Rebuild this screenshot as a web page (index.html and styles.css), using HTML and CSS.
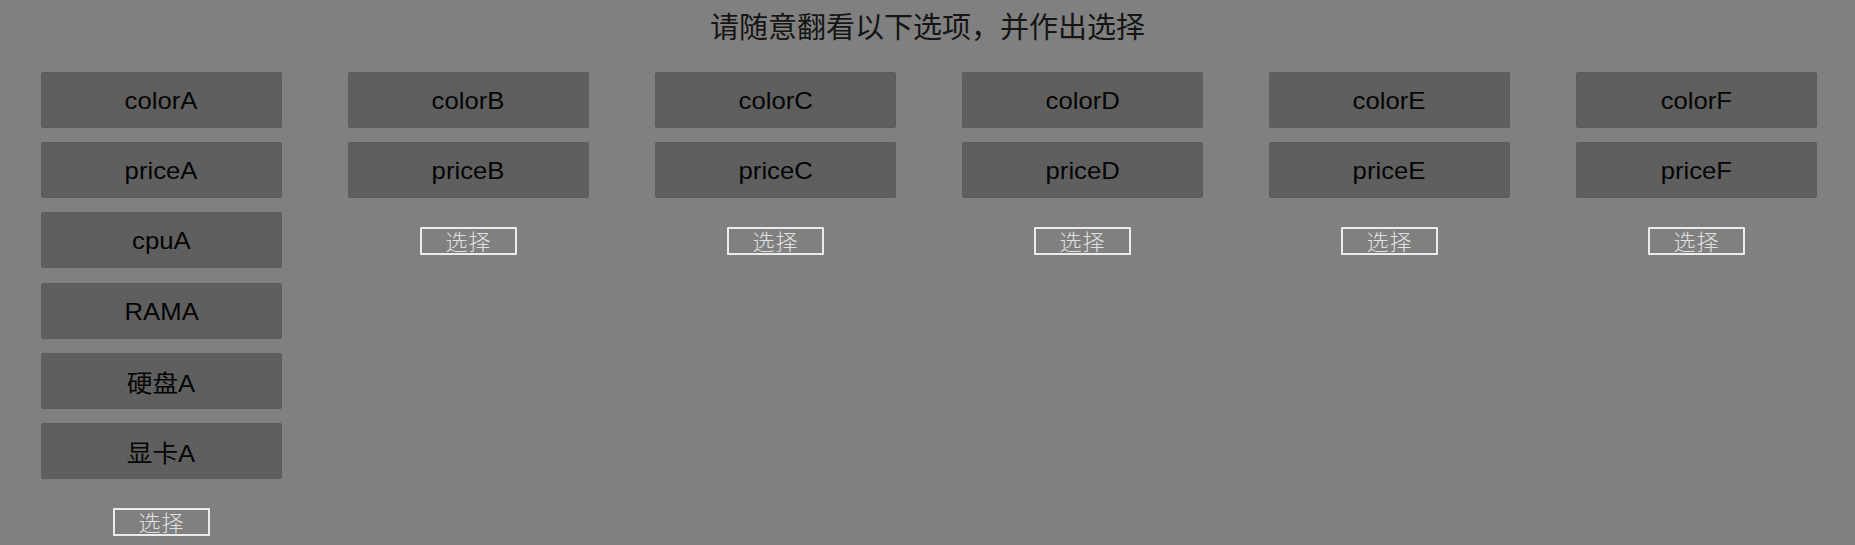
FILE: index.html
```html
<!DOCTYPE html>
<html lang="zh">
<head>
<meta charset="utf-8">
<link rel="stylesheet" href="styles.css">
</head>
<body>
<h1 class="title">请随意翻看以下选项，并作出选择</h1>
<div class="columns">
  <div class="col">
    <div class="box"><span class="label">colorA</span></div>
    <div class="box"><span class="label">priceA</span></div>
    <div class="box"><span class="label">cpuA</span></div>
    <div class="box"><span class="label">RAMA</span></div>
    <div class="box"><span class="label">硬盘A</span></div>
    <div class="box"><span class="label">显卡A</span></div>
    <button class="choose">选择</button>
  </div>
  <div class="col">
    <div class="box"><span class="label">colorB</span></div>
    <div class="box"><span class="label">priceB</span></div>
    <button class="choose">选择</button>
  </div>
  <div class="col">
    <div class="box"><span class="label">colorC</span></div>
    <div class="box"><span class="label">priceC</span></div>
    <button class="choose">选择</button>
  </div>
  <div class="col">
    <div class="box"><span class="label">colorD</span></div>
    <div class="box"><span class="label">priceD</span></div>
    <button class="choose">选择</button>
  </div>
  <div class="col">
    <div class="box"><span class="label">colorE</span></div>
    <div class="box"><span class="label">priceE</span></div>
    <button class="choose">选择</button>
  </div>
  <div class="col">
    <div class="box"><span class="label">colorF</span></div>
    <div class="box"><span class="label">priceF</span></div>
    <button class="choose">选择</button>
  </div>
</div>
</body>
</html>
```
FILE: styles.css
```css
html, body {
  margin: 0;
  padding: 0;
  background: #808080;
  height: 100%;
  overflow: hidden;
}
body {
  font-family: "Liberation Sans", "Noto Sans CJK SC", sans-serif;
}
.title {
  margin: 0;
  padding-top: 5px;
  height: 43px;
  line-height: 40px;
  text-align: center;
  font-family: "Noto Sans CJK SC", sans-serif;
  font-weight: 400;
  font-size: 29px;
  color: #151515;
}
.columns {
  display: flex;
  gap: 66px;
  padding-left: 41px;
  margin-top: 24px;
}
.col {
  width: 241px;
  display: flex;
  flex-direction: column;
  align-items: center;
  gap: 14.2px;
}
.box {
  width: 100%;
  height: 56px;
  box-sizing: border-box;
  background: #5f5f5f;
  border: 1px solid #5c5c5c;
  border-radius: 2px;
  display: flex;
  align-items: center;
  justify-content: center;
  padding-top: 2px;
  color: #050505;
  font-size: 24px;
}
.label {
  display: inline-block;
  transform: scaleX(1.07);
}
.choose {
  margin-top: 15px;
  width: 97px;
  height: 28px;
  box-sizing: border-box;
  background: transparent;
  border: 2px solid #ececec;
  border-radius: 1px;
  padding: 0 0 8px 0;
  color: #e0e0e0;
  font-family: "Noto Sans CJK SC", sans-serif;
  font-weight: 300;
  font-size: 22px;
  line-height: 22px;
  letter-spacing: 1px;
}
```
